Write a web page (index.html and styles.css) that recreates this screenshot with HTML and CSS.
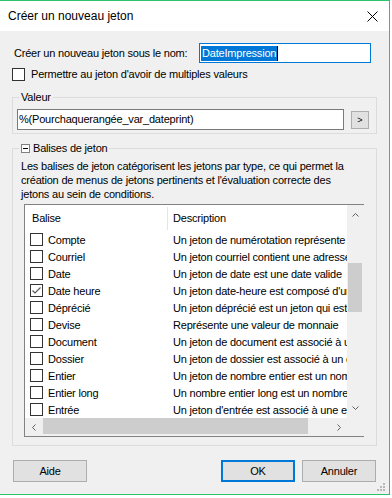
FILE: index.html
```html
<!DOCTYPE html>
<html>
<head>
  <meta charset="UTF-8">
  <title>Créer un nouveau jeton</title>
  <link rel="stylesheet" href="styles.css">
</head>
<body>
<div class="window">
  <div class="titlebar">
    <span class="title">Créer un nouveau jeton</span>
    <svg class="close" width="11" height="11" viewBox="0 0 11 11"><path d="M0.5 0.5L10.5 10.5M10.5 0.5L0.5 10.5" stroke="#000" stroke-width="1" fill="none"/></svg>
  </div>

  <div class="content">
    <div class="name-row">
      <label>Créer un nouveau jeton sous le nom:</label>
      <div class="textbox name-box"><span class="sel">DateImpression</span><span class="caret"></span></div>
    </div>

    <div class="check-row"><span class="box"></span><span>Permettre au jeton d'avoir de multiples valeurs</span></div>

    <fieldset class="group value-group">
      <legend>Valeur</legend>
      <div class="value-row">
        <div class="textbox value-box">%(Pourchaquerangée_var_dateprint)</div>
        <button class="small-btn">&gt;</button>
      </div>
    </fieldset>

    <fieldset class="group tags-group">
      <legend><svg class="collapse" width="9" height="9" viewBox="0 0 9 9"><rect x="0.5" y="0.5" width="8" height="8" fill="#fff" stroke="#808080"/><path d="M2 4.5H7" stroke="#000"/></svg><span>Balises de jeton</span></legend>
      <p class="desc">Les balises de jeton catégorisent les jetons par type, ce qui permet la<br>création de menus de jetons pertinents et l'évaluation correcte des<br>jetons au sein de conditions.</p>

      <div class="list">
        <div class="list-main">
          <div class="list-header">
            <div class="col1">Balise</div>
            <div class="col2">Description</div>
          </div>
          <div class="row"><div class="col1"><span class="box"></span>Compte</div><div class="col2">Un jeton de numérotation représente un compte</div></div>
          <div class="row"><div class="col1"><span class="box"></span>Courriel</div><div class="col2">Un jeton courriel contient une adresse courriel</div></div>
          <div class="row"><div class="col1"><span class="box"></span>Date</div><div class="col2">Un jeton de date est une date valide</div></div>
          <div class="row"><div class="col1"><span class="box"><svg width="11" height="11" viewBox="0 0 11 11"><path d="M1.5 5.5L4 8L9.5 2.5" stroke="#555" stroke-width="1.1" fill="none"/></svg></span>Date heure</div><div class="col2">Un jeton date-heure est composé d'une date et d'une heure</div></div>
          <div class="row"><div class="col1"><span class="box"></span>Déprécié</div><div class="col2">Un jeton déprécié est un jeton qui est obsolète</div></div>
          <div class="row"><div class="col1"><span class="box"></span>Devise</div><div class="col2">Représente une valeur de monnaie</div></div>
          <div class="row"><div class="col1"><span class="box"></span>Document</div><div class="col2">Un jeton de document est associé à un document</div></div>
          <div class="row"><div class="col1"><span class="box"></span>Dossier</div><div class="col2">Un jeton de dossier est associé à un dossier</div></div>
          <div class="row"><div class="col1"><span class="box"></span>Entier</div><div class="col2">Un jeton de nombre entier est un nombre</div></div>
          <div class="row"><div class="col1"><span class="box"></span>Entier long</div><div class="col2">Un nombre entier long est un nombre entier</div></div>
          <div class="row"><div class="col1"><span class="box"></span>Entrée</div><div class="col2">Un jeton d'entrée est associé à une entrée</div></div>
        </div>

        <div class="vscroll">
          <div class="arrow"><svg width="7" height="4" viewBox="0 0 7 4"><path d="M0.5 3.5L3.5 0.5L6.5 3.5" stroke="#606060" fill="none"/></svg></div>
          <div class="vgap"></div>
          <div class="vthumb"></div>
          <div class="fill"></div>
          <div class="arrow"><svg width="7" height="4" viewBox="0 0 7 4"><path d="M0.5 0.5L3.5 3.5L6.5 0.5" stroke="#606060" fill="none"/></svg></div>
        </div>

        <div class="hscroll">
          <div class="arrow"><svg width="4" height="7" viewBox="0 0 4 7"><path d="M3.5 0.5L0.5 3.5L3.5 6.5" stroke="#606060" fill="none"/></svg></div>
          <div class="hthumb"></div>
          <div class="fill"></div>
          <div class="arrow"><svg width="4" height="7" viewBox="0 0 4 7"><path d="M0.5 0.5L3.5 3.5L0.5 6.5" stroke="#606060" fill="none"/></svg></div>
        </div>
        <div class="corner"></div>
      </div>
    </fieldset>

    <div class="buttons">
      <button class="btn">Aide</button>
      <div class="fill"></div>
      <button class="btn default">OK</button>
      <button class="btn">Annuler</button>
    </div>
  </div>

  <svg class="grip" width="9" height="9" viewBox="0 0 9 9">
    <rect x="6" y="0" width="2" height="2" fill="#b8b8b8"/>
    <rect x="3" y="3" width="2" height="2" fill="#b8b8b8"/>
    <rect x="6" y="3" width="2" height="2" fill="#b8b8b8"/>
    <rect x="0" y="6" width="2" height="2" fill="#b8b8b8"/>
    <rect x="3" y="6" width="2" height="2" fill="#b8b8b8"/>
    <rect x="6" y="6" width="2" height="2" fill="#b8b8b8"/>
  </svg>
</div>
</body>
</html>
```

FILE: styles.css
```css
* { box-sizing: border-box; }
body { margin: 0; background: #fff; font-family: "Liberation Sans", Arial, sans-serif; font-size: 11px; letter-spacing: -0.2px; color: #000; }

.window { position: relative; width: 390px; height: 495px; background: #f0f0f0; border-top: 1px solid #2bc46d; border-right: 1px solid #2bc46d; border-bottom: 1px solid #2bc46d; display: flex; flex-direction: column; }
.titlebar { height: 30px; flex: none; background: #fff; display: flex; align-items: center; justify-content: space-between; padding: 0 11px 0 8px; }
.title { font-size: 12px; letter-spacing: 0; }

.content { flex: 1; padding: 0 12px; display: flex; flex-direction: column; }
.fill { flex: 1; }

.textbox { background: #fff; border: 1px solid #7a7a7a; white-space: nowrap; overflow: hidden; }
.name-row { margin-top: 12px; height: 20px; display: flex; align-items: center; }
.name-row label { margin-left: 2px; }
.name-box { margin-left: auto; margin-right: 6px; width: 172px; height: 20px; border-color: #0078d7; padding-left: 1px; display: flex; align-items: center; }
.sel { background: #0078d7; color: #fff; line-height: 15px; padding: 0 1px; }
.caret { width: 1px; height: 15px; background: #000; }

.box { width: 13px; height: 13px; flex: none; background: #fff; border: 1px solid #333; display: inline-flex; align-items: center; justify-content: center; }
.check-row { margin-top: 4px; height: 14px; display: flex; align-items: center; gap: 6px; }

.group { margin: 0; min-width: 0; border: 1px solid #dcdcdc; }
.group legend { padding: 0 2px; line-height: 14px; }
.value-group { margin-top: 9px; padding: 5px 7px 3px 4px; }
.value-group legend { margin-left: 2px; }
.value-row { display: flex; align-items: center; }
.value-box { flex: 1; height: 21px; line-height: 19px; padding-left: 1px; }
.small-btn { margin-left: 7px; width: 18px; height: 18px; padding: 0; background: #e1e1e1; border: 1px solid #adadad; font-family: inherit; font-size: 9px; line-height: 14px; }

.tags-group { margin-top: 7px; padding: 4px 12px 8px 8px; }
.tags-group legend { margin-left: -2px; display: flex; align-items: center; gap: 3px; }
.desc { margin: 0; line-height: 14px; white-space: nowrap; }

.list { margin: 3px 0 0 3px; border: 1px solid #828282; background: #fff; display: grid; grid-template-columns: 322px 17px; grid-template-rows: 213px 18px; }
.list-main { overflow: hidden; }
.list-header { height: 26px; display: flex; align-items: center; }
.list-header .col1 { padding-left: 7px; }
.list-header .col2 { border-left: 1px solid #e5e5e5; height: 23px; line-height: 23px; padding-left: 5px; }
.row { height: 17px; display: flex; align-items: center; white-space: nowrap; }
.col1 { width: 142px; flex: none; }
.col2 { flex: none; width: 180px; overflow: hidden; white-space: nowrap; }
.row .col1 { padding-left: 5px; display: flex; align-items: center; gap: 5px; }
.row .col2 { padding-left: 6px; }

.vscroll { background: #f0f0f0; display: flex; flex-direction: column; align-items: stretch; }
.vscroll .arrow { height: 20px; display: flex; align-items: center; justify-content: center; }
.vgap { height: 38px; }
.vthumb { height: 49px; background: #cdcdcd; margin: 0 2px 0 1px; }
.hscroll { background: #f0f0f0; display: flex; }
.hscroll .arrow { width: 17px; display: flex; align-items: center; justify-content: center; }
.hthumb { width: 265px; margin: 0 0 2px 1px; background: #cdcdcd; }
.corner { background: #f0f0f0; }

.buttons { margin-top: 14px; padding: 0 1px; display: flex; gap: 7px; }
.btn { width: 74px; height: 22px; padding: 0; background: #e1e1e1; border: 1px solid #adadad; font-family: inherit; font-size: 11px; letter-spacing: -0.2px; color: #000; }
.btn.default { border: 2px solid #0078d7; }

.grip { position: absolute; right: 3px; bottom: 2px; }
```
